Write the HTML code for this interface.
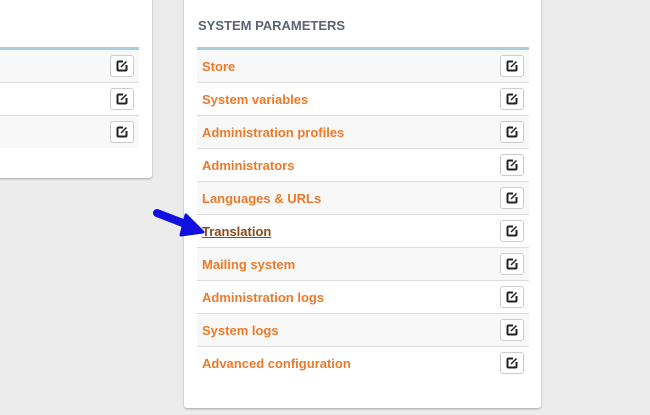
<!DOCTYPE html>
<html><head><style>
body{margin:0;width:650px;height:415px;background:#ececec;position:relative;overflow:hidden;font-family:"Liberation Sans",sans-serif}
.panel{position:absolute;background:#fff;box-shadow:0 1px 2px rgba(0,0,0,.3);border-radius:0 0 3px 3px}
table{border-collapse:collapse;position:absolute;border-top:3px solid #a9cfdc}
td{height:32px;border-bottom:1px solid #ddd;padding:0;font-size:13px;font-weight:bold;color:#ec7a2a}
tr:nth-child(odd) td{background:#f8f8f8}
tr:last-child td{border-bottom:none}
.b{width:22px;height:20px;border:1px solid #ccc;border-radius:3px;background:#fff;display:inline-block;vertical-align:middle;position:relative}
.b svg{position:absolute;left:5px;top:4px}
td.r{text-align:right;padding-right:5px}
td.l{padding-left:5px}
h3{position:absolute;left:198px;top:18px;margin:0;font-size:13px;color:#5c6373;font-weight:bold}
</style></head><body>
<div class="panel" style="left:-5px;top:-5px;width:157px;height:183px">
<table style="left:5px;top:52px;width:139px">
<tr><td></td><td class="r"><span class="b"><svg width="12" height="12" viewBox="0 0 12 12"><path d="M7 1.5H2.5a1 1 0 0 0-1 1v7a1 1 0 0 0 1 1h7a1 1 0 0 0 1-1V5" fill="none" stroke="#222" stroke-width="2"/><path d="M5 7l5.5-5.5" stroke="#222" stroke-width="1.5"/></svg></span></td></tr>
<tr><td></td><td class="r"><span class="b"><svg width="12" height="12" viewBox="0 0 12 12"><path d="M7 1.5H2.5a1 1 0 0 0-1 1v7a1 1 0 0 0 1 1h7a1 1 0 0 0 1-1V5" fill="none" stroke="#222" stroke-width="2"/><path d="M5 7l5.5-5.5" stroke="#222" stroke-width="1.5"/></svg></span></td></tr>
<tr><td></td><td class="r"><span class="b"><svg width="12" height="12" viewBox="0 0 12 12"><path d="M7 1.5H2.5a1 1 0 0 0-1 1v7a1 1 0 0 0 1 1h7a1 1 0 0 0 1-1V5" fill="none" stroke="#222" stroke-width="2"/><path d="M5 7l5.5-5.5" stroke="#222" stroke-width="1.5"/></svg></span></td></tr>
</table></div>
<div class="panel" style="left:184px;top:-5px;width:357px;height:413px"></div>
<h3>SYSTEM PARAMETERS</h3>
<table style="left:197px;top:47px;width:332px" id="t">
<tr><td class="l">Store</td></tr>
<tr><td class="l">System variables</td></tr>
<tr><td class="l">Administration profiles</td></tr>
<tr><td class="l">Administrators</td></tr>
<tr><td class="l">Languages &amp; URLs</td></tr>
<tr><td class="l"><span style="color:#8a4a1a;text-decoration:underline">Translation</span></td></tr>
<tr><td class="l">Mailing system</td></tr>
<tr><td class="l">Administration logs</td></tr>
<tr><td class="l">System logs</td></tr>
<tr><td class="l">Advanced configuration</td></tr>
</table>
<script>
document.querySelectorAll('#t tr').forEach(function(r){var d=document.createElement('td');d.className='r';d.innerHTML='<span class="b"><svg width="12" height="12" viewBox="0 0 12 12"><path d="M7 1.5H2.5a1 1 0 0 0-1 1v7a1 1 0 0 0 1 1h7a1 1 0 0 0 1-1V5" fill="none" stroke="#222" stroke-width="2"/><path d="M5 7l5.5-5.5" stroke="#222" stroke-width="1.5"/></svg></span>';r.appendChild(d);});
</script>
<svg style="position:absolute;left:150px;top:205px" width="60" height="40" viewBox="0 0 60 40">
<path d="M7 8L38 20" stroke="#1010e0" stroke-width="8" stroke-linecap="round"/>
<path d="M36 10L53 27L31 30Z" fill="#1010e0" stroke="#1010e0" stroke-width="3" stroke-linejoin="round"/>
</svg>
</body></html>
